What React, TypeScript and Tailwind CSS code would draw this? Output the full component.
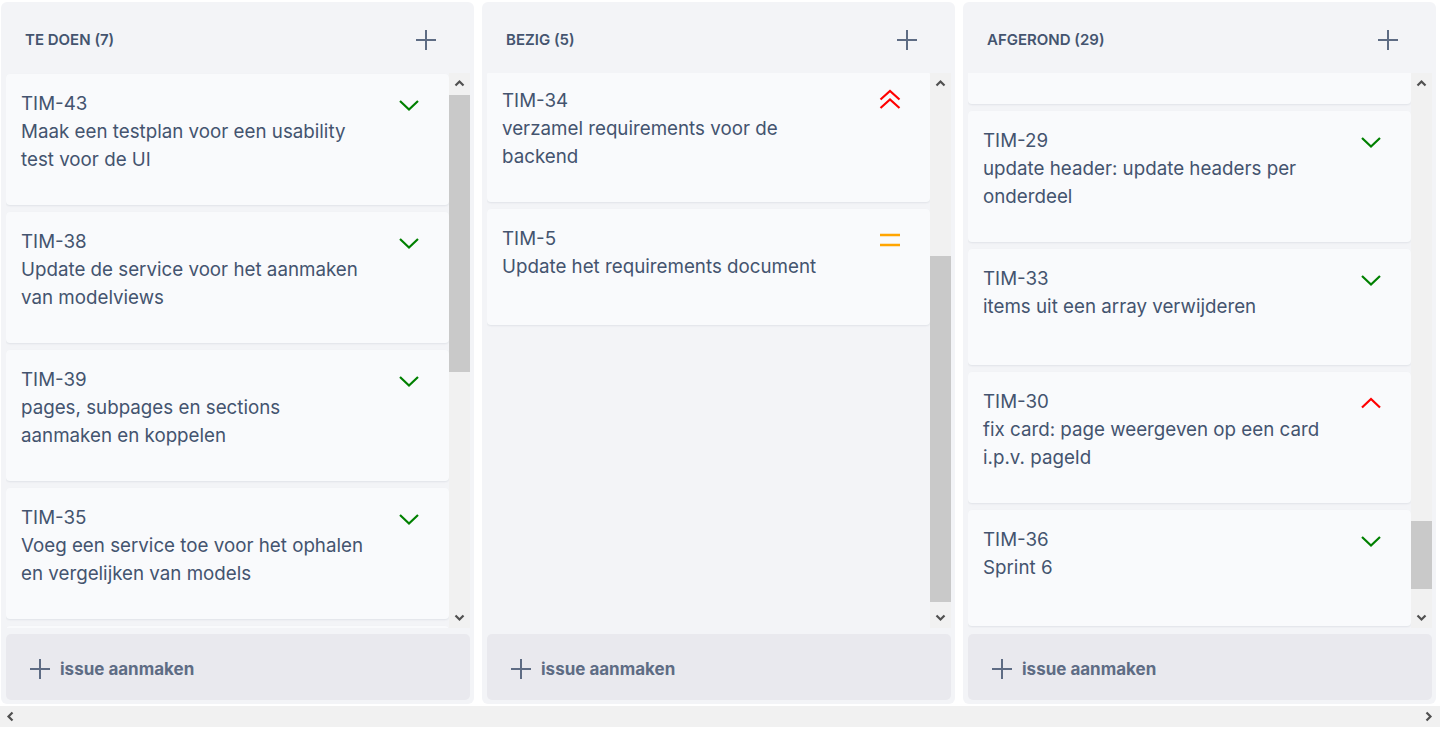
import { FC } from "react";

type Priority = "low" | "highest" | "high" | "medium";

interface Issue {
  id: string;
  title: string;
  priority: Priority;
}

interface Column {
  title: string;
  listClass: string;
  thumbTop: number;
  thumbHeight: number;
  issues: Issue[];
}

const columns: Column[] = [
  {
    title: "TE DOEN (7)",
    listClass: "pt-px",
    thumbTop: 0,
    thumbHeight: 277,
    issues: [
      { id: "TIM-43", title: "Maak een testplan voor een usability test voor de UI", priority: "low" },
      { id: "TIM-38", title: "Update de service voor het aanmaken van modelviews", priority: "low" },
      { id: "TIM-39", title: "pages, subpages en sections aanmaken en koppelen", priority: "low" },
      { id: "TIM-35", title: "Voeg een service toe voor het ophalen en vergelijken van models", priority: "low" },
      { id: "TIM-41", title: "Maak een overzicht van alle pages", priority: "low" },
    ],
  },
  {
    title: "BEZIG (5)",
    listClass: "-mt-[2px]",
    thumbTop: 161,
    thumbHeight: 346,
    issues: [
      { id: "TIM-34", title: "verzamel requirements voor de backend", priority: "highest" },
      { id: "TIM-5", title: "Update het requirements document", priority: "medium" },
    ],
  },
  {
    title: "AFGEROND (29)",
    listClass: "h-full justify-end pb-[2px]",
    thumbTop: 426,
    thumbHeight: 68,
    issues: [
      { id: "TIM-28", title: "update footer", priority: "low" },
      { id: "TIM-29", title: "update header: update headers per onderdeel", priority: "low" },
      { id: "TIM-33", title: "items uit een array verwijderen", priority: "low" },
      { id: "TIM-30", title: "fix card: page weergeven op een card i.p.v. pageId", priority: "high" },
      { id: "TIM-36", title: "Sprint 6", priority: "low" },
    ],
  },
];

const PlusIcon: FC = () => (
  <svg width="20" height="20" viewBox="0 0 20 20" fill="none" stroke="#5e6c84" strokeWidth="2">
    <path d="M10 0v20M0 10h20" />
  </svg>
);

const PriorityIcon: FC<{ priority: Priority }> = ({ priority }) => {
  if (priority === "highest")
    return (
      <svg width="24" height="24" viewBox="0 0 24 24" fill="none" stroke="#ff0000" strokeWidth="2.2">
        <path d="M2.5 10.5 12 2l9.5 8.5M2.5 19 12 10.5l9.5 8.5" />
      </svg>
    );
  if (priority === "high")
    return (
      <svg width="24" height="24" viewBox="0 0 24 24" fill="none" stroke="#ff0000" strokeWidth="2.2">
        <path d="M3 17.5 12 9l9 8.5" />
      </svg>
    );
  if (priority === "medium")
    return (
      <svg width="24" height="24" viewBox="0 0 24 24" fill="none" stroke="#ffa500" strokeWidth="2.6">
        <path d="M2 8h20M2 18h20" />
      </svg>
    );
  return (
    <svg width="24" height="24" viewBox="0 0 24 24" fill="none" stroke="#008000" strokeWidth="2.2">
      <path d="M3 9l9 8.5L21 9" />
    </svg>
  );
};

const ScrollArrow: FC<{ dir: "up" | "down" | "left" | "right" }> = ({ dir }) => {
  const d = {
    up: "M1.5 6.5 5.5 2.5l4 4",
    down: "M1.5 3.5 5.5 7.5l4-4",
    left: "M6.5 1.5 2.5 5.5l4 4",
    right: "M3.5 1.5 7.5 5.5l-4 4",
  }[dir];
  return (
    <svg width="11" height="11" viewBox="0 0 11 11" fill="none" stroke="#505050" strokeWidth="2.2">
      <path d={d} />
    </svg>
  );
};

const VScrollbar: FC<{ top: number; height: number }> = ({ top, height }) => (
  <div className="flex w-[21px] shrink-0 flex-col bg-[#f1f1f1]">
    <div className="flex h-[22px] items-center justify-center">
      <ScrollArrow dir="up" />
    </div>
    <div className="flex-1">
      <div className="bg-[#c9c9c9]" style={{ marginTop: top, height }} />
    </div>
    <div className="flex h-[26px] items-center justify-center pt-[5px]">
      <ScrollArrow dir="down" />
    </div>
  </div>
);

const IssueCard: FC<{ issue: Issue }> = ({ issue }) => (
  <div className="flex min-h-[116px] shrink-0 justify-between rounded-[4px] bg-[#f9fafc] px-[15px] pb-[31px] pt-[16px] shadow-[0_1px_2px_rgba(9,30,66,0.08)]">
    <div className="w-[346px] text-[18.75px] leading-[28px] text-[#44546f]">
      <div>{issue.id}</div>
      <div>{issue.title}</div>
    </div>
    <div className="mr-[13px] flex h-[28px] w-6 items-center justify-center">
      <PriorityIcon priority={issue.priority} />
    </div>
  </div>
);

const BoardColumn: FC<{ column: Column }> = ({ column }) => (
  <div className="flex h-[702px] w-[473px] shrink-0 flex-col rounded-md bg-[#f3f4f7] pb-[4px]">
    <div className="flex h-[71px] shrink-0 items-center justify-between pl-6 pr-[38px] pt-[5px]">
      <h2 className="text-[15px] font-semibold uppercase leading-[20px] text-[#44546f]">{column.title}</h2>
      <PlusIcon />
    </div>
    <div className="flex min-h-0 flex-1 pl-[5px] pr-[4px]">
      <div className="min-w-0 flex-1 overflow-hidden">
        <div className={`flex flex-col gap-[7px] ${column.listClass}`}>
          {column.issues.map((issue) => (
            <IssueCard key={issue.id} issue={issue} />
          ))}
        </div>
      </div>
      <VScrollbar top={column.thumbTop} height={column.thumbHeight} />
    </div>
    <div className="ml-[5px] mr-[4px] mt-[6px] flex h-[66px] shrink-0 items-center gap-[10px] rounded-[5px] bg-[#e9e9ee] pl-6 pt-[3px]">
      <PlusIcon />
      <span className="text-[17px] font-bold leading-[22px] text-[#5e6c84]">issue aanmaken</span>
    </div>
  </div>
);

const App: FC = () => (
  <div className="flex h-[732px] w-[1442px] flex-col overflow-hidden bg-white font-['Inter','Noto_Sans',sans-serif]">
    <div className="flex gap-2 pl-px pt-[2px]">
      {columns.map((column) => (
        <BoardColumn key={column.title} column={column} />
      ))}
    </div>
    <div className="mt-[2px] flex h-[21px] w-[1440px] items-center justify-between bg-[#f1f1f1] px-[6px]">
      <ScrollArrow dir="left" />
      <ScrollArrow dir="right" />
    </div>
  </div>
);

export default App;
